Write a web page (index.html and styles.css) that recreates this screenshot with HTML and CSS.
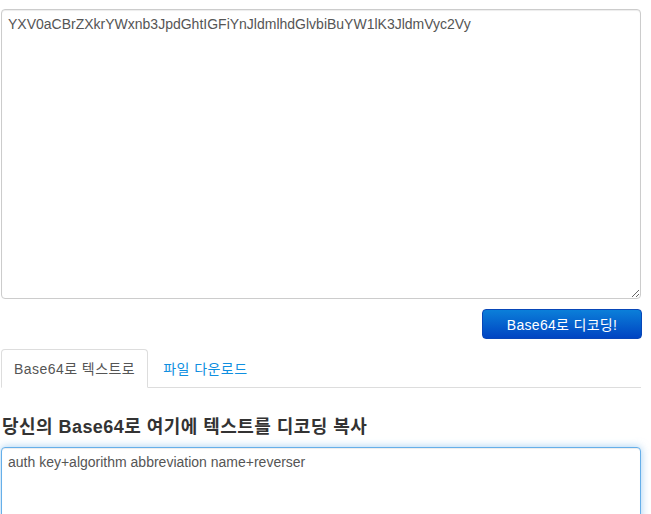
FILE: index.html
```html
<!DOCTYPE html>
<html lang="ko">
<head>
    <meta charset="UTF-8">
    <meta name="viewport" content="width=device-width, initial-scale=1.0">
    <title>Base64 디코딩</title>
    <link rel="stylesheet" href="styles.css">
</head>
<body>
    <div class="wrapper">
        <textarea class="code-input" id="encoded-input">YXV0aCBrZXkrYWxnb3JpdGhtIGFiYnJldmlhdGlvbiBuYW1lK3JldmVyc2Vy</textarea>

        <div class="button-row">
            <button class="decode-button">Base64로 디코딩!</button>
        </div>

        <ul class="tabs">
            <li class="tab active">Base64로 텍스트로</li>
            <li class="tab"><a href="#">파일 다운로드</a></li>
        </ul>

        <h3 class="result-title">당신의 Base64로 여기에 텍스트를 디코딩 복사</h3>
        <textarea class="code-input result-output">auth key+algorithm abbreviation name+reverser</textarea>
    </div>
</body>
</html>
```

FILE: styles.css
```css
body {
    font-family: "Liberation Sans", "Noto Sans CJK KR", Arial, sans-serif;
    font-size: 14px;
    color: #333;
    margin: 0;
    padding: 0;
    background-color: #fff;
}

.wrapper {
    width: 640px;
    margin: 9px 0 0 1px;
}

.code-input {
    display: block;
    box-sizing: border-box;
    width: 100%;
    height: 290px;
    padding: 4px 6px;
    font-family: "Liberation Sans", "Noto Sans CJK KR", Arial, sans-serif;
    font-size: 14px;
    line-height: 20px;
    color: #555;
    border: 1px solid #ccc;
    border-radius: 4px;
    box-shadow: inset 0 1px 1px rgba(0, 0, 0, 0.075);
    resize: vertical;
}

.button-row {
    display: flex;
    justify-content: flex-end;
    margin-top: 10px;
    margin-right: -1px;
}

.decode-button {
    width: 160px;
    height: 30px;
    font-family: "Liberation Sans", "Noto Sans CJK KR", Arial, sans-serif;
    font-size: 14px;
    letter-spacing: 0.3px;
    color: #fff;
    border: 1px solid #0846b8;
    border-radius: 4px;
    background-image: linear-gradient(to bottom, #0b7fd9, #0044c2);
    cursor: pointer;
}

.tabs {
    display: flex;
    list-style: none;
    margin: 10px 0 0 0;
    padding: 0;
    border-bottom: 1px solid #ddd;
}

.tab {
    padding: 9px 12px 8px 12px;
    line-height: 20px;
    letter-spacing: 0.45px;
    margin-bottom: -1px;
    margin-right: 2px;
    border: 1px solid transparent;
    border-radius: 4px 4px 0 0;
}

.tab.active {
    color: #555;
    background-color: #fff;
    border-color: #ddd #ddd transparent #ddd;
}

.tab a {
    color: #0f8fe0;
    text-decoration: none;
}

.result-title {
    font-size: 18px;
    font-weight: bold;
    letter-spacing: 0.45px;
    margin: 28px 0 9px 1px;
    line-height: 22px;
    color: #333;
}

.result-output {
    height: 80px;
    border-color: #66afe9;
    outline: 0;
    box-shadow: inset 0 1px 1px rgba(0, 0, 0, 0.075), 0 0 8px rgba(102, 175, 233, 0.6);
}
```
